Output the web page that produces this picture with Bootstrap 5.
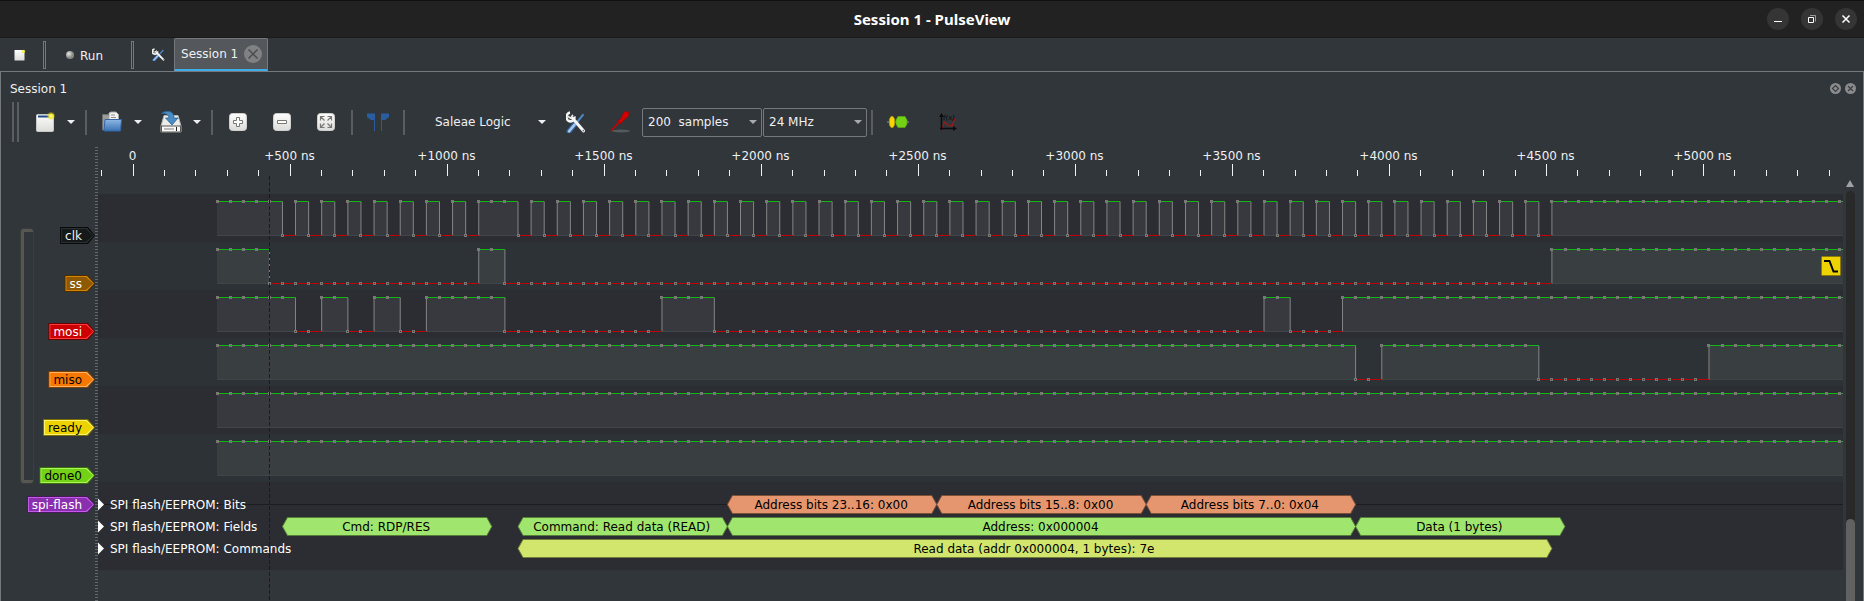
<!DOCTYPE html>
<html lang="en" data-bs-theme="dark">
<head>
<meta charset="utf-8">
<meta name="viewport" content="width=device-width, initial-scale=1">
<title>Session 1 - PulseView</title>
<link href="https://cdn.jsdelivr.net/npm/bootstrap@5.3.0/dist/css/bootstrap.min.css" rel="stylesheet">
<style>
body{background:#31363b;color:#eff0f1;font-family:"DejaVu Sans",sans-serif;font-size:12px;line-height:18px}
button,select{font:inherit;color:inherit}
svg{display:block;flex:none}
.titlebar{height:38px;background:#222;border-top:1px solid #111;border-bottom:1px solid #1a1a1a;font-family:"Noto Sans",sans-serif;font-weight:700;font-size:15px;color:#fff}
.side{flex:1 1 0;padding:0 7px}
.winbtns{gap:12px}
.winbtn{width:22px;height:22px;border:0;border-radius:50%;background:#353535;padding:0}
.plain{background:none;border:0;padding:0}
.mainbar{height:33px;padding-left:8px}
.mainbar .icon-cell{width:24px}
.dsep{width:3px;height:28px;border:1px solid #76797c}
.new-cell{margin-right:11px}
.run-cell{margin:0 28px 0 20px;gap:6px;height:20px;padding-top:2px}
.session-tab{width:94px;height:33px;border:1px solid #76797c;border-bottom:2px solid #3daee9;background:#54575b;border-radius:2px 2px 0 0;padding:0 5px 0 6px;margin-left:8px}
.pane{border:1px solid #76797c;border-bottom:0;min-height:0}
.dockhead{height:30px;padding:3px 7px 0 9px}
.tools{height:40px;padding-left:11px}
.grip{width:7px;height:40px;border:solid #5b5e60;border-width:0 2px;margin-right:4px}
.vsep{width:2px;height:25px;background:#5b5e60;margin:0 3px}
.tb{width:44px;height:30px}
.drop{width:15px;height:30px}
.combo{height:29px;border:1px solid #76797c;border-radius:2px;background:#31363b;padding:0 5px;appearance:none}
.combo.flat{border-color:transparent;padding-left:26px}
.combowrap{margin-right:1px}
.w-device{width:145px}
.w-samples{width:120px}
.w-rate{width:104px}
.combowrap svg{position:absolute;right:5px;top:12px;pointer-events:none}
.labels{width:94px}
.group{width:12px;height:254px;margin:87px 0 0 20px;border:solid #565751;border-width:3px 0 3px 3px;border-radius:2px;outline:1px solid #3a3d3d}
.tags{padding-top:85px;margin-left:-8px}
.sig{position:relative;height:17px;line-height:18px;white-space:nowrap;margin-bottom:31px;padding:0 13px 0 5px;isolation:isolate;background:var(--edge);color:var(--ink)}
.sig:nth-last-child(2){margin-bottom:12px}
.sig,.sig::before,.sig::after{clip-path:polygon(0 0,calc(100% - 7px) 0,100% 50%,calc(100% - 7px) 100%,0 100%)}
.sig::before{content:"";position:absolute;inset:1px;background:var(--rim);z-index:-2}
.sig::after{content:"";position:absolute;inset:2px;background:var(--face);z-index:-1}
.split{width:3px;margin-top:4px;background:repeating-linear-gradient(#31363b 0 1px,#65686b 1px 2px,#31363b 2px 3px)}
.wave{min-width:0}
.trig{position:absolute;right:2px;top:114px}
.vbar{width:20px;padding:38px 8px 0 3px}
.trough{background:#292929;border-radius:5px 5px 0 0;width:9px}
.thumb{height:82px;background:#616161;border-radius:5px 5px 0 0}
</style>
</head>
<body class="vh-100 d-flex flex-column overflow-hidden">
<svg width="0" height="0" class="position-absolute">
  <defs>
    <linearGradient id="paper" x2="0" y2="1"><stop stop-color="#fdfdfd"/><stop offset="1" stop-color="#dcdcda"/></linearGradient>
    <linearGradient id="blue" x2="0" y2="1"><stop stop-color="#8db8e4"/><stop offset="1" stop-color="#3b73b5"/></linearGradient>
    <radialGradient id="ball" cx=".35" cy=".35"><stop stop-color="#e8e8e2"/><stop offset="1" stop-color="#888a85"/></radialGradient>
    <radialGradient id="glow"><stop stop-color="#fffbd0"/><stop offset=".4" stop-color="#f6ee2c"/><stop offset="1" stop-color="#e8dc10" stop-opacity=".15"/></radialGradient>
    <g id="wrench">
      <path d="M17.500 3L9 12.500" stroke="#4f86c6" stroke-width="2"/>
      <path d="M8.500 12.500L3 18.500" stroke="#2f62a0" stroke-width="5" stroke-linecap="round"/>
      <path d="M8.500 12.500L3 18.500" stroke="#a9c6e8" stroke-width="2.500" stroke-linecap="round"/>
      <path d="M6.500 6.500L17.500 18" stroke="#f4f4f2" stroke-width="3" stroke-linecap="round"/>
      <path d="M4 1.500A4 4 0 1 0 8.500 5" stroke="#f4f4f2" stroke-width="2.500" fill="none"/>
      <path d="M1.500 4.500L4.500 6.500 7 3.500" stroke="#e6e6e4" stroke-width="1.500" fill="none"/>
      <circle cx="17.300" cy="17.800" r=".8" fill="#666"/>
    </g>
    <path id="caret" d="M0 0h8l-4 4z"/>
  </defs>
</svg>
<header class="titlebar d-flex align-items-center flex-shrink-0">
  <div class="side"></div>
  <div>Session 1 - PulseView</div>
  <div class="side winbtns d-flex justify-content-end">
    <button class="winbtn" aria-label="Minimize"><svg width="22" height="22"><path d="M7 13.500h8" stroke="#fff"/></svg></button>
    <button class="winbtn" aria-label="Restore"><svg width="22" height="22" fill="none"><path d="M9 7.500h5.500v6" stroke="#999"/><path d="M7.500 9.500h5v5h-5z" stroke="#fff"/></svg></button>
    <button class="winbtn" aria-label="Close"><svg width="22" height="22"><path d="M7.500 7.500l7 7m0-7l-7 7" stroke="#fff" stroke-width="1.500"/></svg></button>
  </div>
</header>

<nav class="mainbar d-flex align-items-center flex-shrink-0">
  <button class="plain icon-cell new-cell d-flex justify-content-center" aria-label="New session"><svg width="12" height="12"><rect x=".5" y="1" width="10" height="10.500" rx=".5" fill="url(#paper)"/><circle cx="9.500" cy="2.500" r="2" fill="url(#glow)"/></svg></button>
  <span class="dsep"></span>
  <button class="plain run-cell d-flex align-items-center"><svg width="8" height="10"><circle cx="4" cy="4" r="4" fill="url(#ball)"/></svg>Run</button>
  <span class="dsep"></span>
  <button class="plain icon-cell d-flex justify-content-center ms-2 ps-2" aria-label="Settings"><svg width="13" height="13" viewBox="0 0 20 20"><use href="#wrench"/></svg></button>
  <div class="session-tab d-flex align-items-center justify-content-between">
    <span>Session 1</span>
    <button class="plain" aria-label="Close tab"><svg width="18" height="18"><circle cx="9" cy="9" r="9" fill="#7f8182"/><path d="M4.500 4.500l9 9m0-9l-9 9" stroke="#4a4d50" stroke-width="1.500"/></svg></button>
  </div>
</nav>

<main class="pane flex-grow-1 d-flex flex-column">
  <div class="dockhead d-flex align-items-center justify-content-between flex-shrink-0">
    <span>Session 1</span>
    <span class="d-flex gap-1">
      <button class="plain" aria-label="Float"><svg width="11" height="11" fill="none"><circle cx="5.500" cy="5.500" r="5.500" fill="#8a8c8e"/><path d="M5.500 2.500l3 3-3 3-3-3z" stroke="#3a3d40" stroke-width="1.200"/></svg></button>
      <button class="plain" aria-label="Close"><svg width="11" height="11"><circle cx="5.500" cy="5.500" r="5.500" fill="#8a8c8e"/><path d="M3 3l5 5m0-5l-5 5" stroke="#3a3d40" stroke-width="1.200"/></svg></button>
    </span>
  </div>

  <div class="tools d-flex align-items-center flex-shrink-0">
    <span class="grip"></span>
    <button class="plain tb d-flex align-items-center justify-content-center" aria-label="New view"><svg width="20" height="22"><rect x="1.500" y="3.500" width="17" height="17" rx="1" fill="url(#paper)" stroke="#c9c9c5"/><rect x="3" y="4.500" width="12" height="2" fill="#204a87"/><circle cx="16" cy="5" r="4" fill="url(#glow)"/></svg></button>
    <button class="plain drop" aria-label="New view menu"><svg width="8" height="4" fill="#eff0f1"><use href="#caret"/></svg></button>
    <span class="vsep"></span>
    <button class="plain tb d-flex align-items-center justify-content-center" aria-label="Open"><svg width="20" height="22"><path d="M.5 19V3.500H6L8 6v13z" fill="#9b9d9a" stroke="#6d6f6c"/><path d="M7 11V2l2-1h5l2.500 2.500V11z" fill="#f2f2f0" stroke="#a5a5a1"/><path d="M9 4h4m-4 2.500h5" stroke="#8b8d8a"/><path d="M3 8.500h16.500l-1 11.500H2z" fill="url(#blue)" stroke="#3465a4"/></svg></button>
    <button class="plain drop" aria-label="Open menu"><svg width="8" height="4" fill="#eff0f1"><use href="#caret"/></svg></button>
    <button class="plain tb d-flex align-items-center justify-content-center" aria-label="Save"><svg width="22" height="22"><path d="M4 4.500h14l3 10.500v6H1v-6z" fill="#ecece9" stroke="#b5b5b0"/><rect x="1.500" y="15" width="19" height="6" fill="#f8f8f6" stroke="#555753"/><path d="M4 18h10" stroke="#bbb" stroke-width="2"/><path d="M16.500 16v4" stroke="#222"/><path d="M1.500 2.500C5-.5 14-1.500 14 7h4l-6 7-6.500-7H9C9 4 6 2 1.500 2.500z" fill="#4b8cc4" stroke="#2a6496" stroke-width=".8"/></svg></button>
    <button class="plain drop" aria-label="Save menu"><svg width="8" height="4" fill="#eff0f1"><use href="#caret"/></svg></button>
    <span class="vsep"></span>
    <button class="plain tb d-flex align-items-center justify-content-center" aria-label="Zoom in"><svg width="18" height="18"><rect x=".5" y=".5" width="17" height="17" rx="3" fill="url(#paper)" stroke="#d0d0cc"/><path d="M7.500 4.500h3v3h3v3h-3v3h-3v-3h-3v-3h3z" fill="#fff" stroke="#777975"/></svg></button>
    <button class="plain tb d-flex align-items-center justify-content-center" aria-label="Zoom out"><svg width="18" height="18"><rect x=".5" y=".5" width="17" height="17" rx="3" fill="url(#paper)" stroke="#d0d0cc"/><path d="M4.500 7.500h9v3h-9z" fill="#fff" stroke="#777975"/></svg></button>
    <button class="plain tb d-flex align-items-center justify-content-center" aria-label="Zoom to fit"><svg width="18" height="18"><rect x=".5" y=".5" width="17" height="17" rx="3" fill="url(#paper)" stroke="#d0d0cc"/><path d="M3.500 7.500v-4h4M10.500 3.500h4v4M14.500 10.500v4h-4M7.500 14.500h-4v-4M4 4l3.500 3.500M14 4l-3.500 3.500M14 14l-3.500-3.500M4 14l3.500-3.500" fill="none" stroke="#777975" stroke-width="1.200"/></svg></button>
    <span class="vsep"></span>
    <button class="plain tb d-flex align-items-center justify-content-center" aria-label="Show cursors"><svg width="22" height="20"><path d="M0 1.500h8V19H7V8H4L0 5zM22 1.500h-8V19h1V8h3l4-3z" fill="#2a5ca0"/></svg></button>
    <span class="vsep"></span>
    <div class="combowrap position-relative">
      <select class="combo flat w-device" aria-label="Device"><option>Saleae Logic</option></select>
      <svg width="10" height="5" fill="#eff0f1"><use href="#caret"/></svg>
    </div>
    <button class="plain tb d-flex align-items-center justify-content-center" aria-label="Configure device"><svg width="20" height="22" viewBox="0 0 20 20" preserveAspectRatio="none"><use href="#wrench"/></svg></button>
    <button class="plain tb d-flex align-items-center justify-content-center" aria-label="Configure channels"><svg width="20" height="22"><ellipse cx="11" cy="20" rx="9" ry="1.500" fill="#555a5d"/><path d="M1 20L9 11" stroke="#c00" stroke-width="1.500"/><path d="M8 9.500L10.500 8 14 1l4.500-.5V5L12 11l-1.500 2z" fill="#d40000" stroke="#a40000" stroke-width=".6"/></svg></button>
    <div class="combowrap position-relative">
      <select class="combo w-samples" aria-label="Sample count"><option>200&nbsp; samples</option></select>
      <svg width="8" height="4" fill="#a8aaab"><use href="#caret"/></svg>
    </div>
    <div class="combowrap position-relative">
      <select class="combo w-rate" aria-label="Sample rate"><option>24 MHz</option></select>
      <svg width="8" height="4" fill="#a8aaab"><use href="#caret"/></svg>
    </div>
    <span class="vsep"></span>
    <button class="plain tb d-flex align-items-center justify-content-center me-1" aria-label="Add protocol decoder"><svg width="22" height="14"><path d="M0 7h22" stroke="#8f9294"/><path d="M4 1.500h2L7.500 4v6L6 12.500H4L2.500 10V4z" fill="#f5d400" stroke="#c4a000" stroke-width=".6"/><path d="M11 1.500h7L20 5v4l-2 3.500h-7L9 9V5z" fill="#73d216" stroke="#5fae12" stroke-width=".6"/></svg></button>
    <button class="plain tb d-flex align-items-center justify-content-center ps-1" aria-label="Add math signal"><svg width="18" height="18"><path d="M3 17L5 9l4 3 4 1 3-8" stroke="#a3151a" stroke-width="1.200" fill="none"/><path d="M2.500 17V3M1 15.500h15" stroke="#0c0d0e" stroke-width="1.500"/><path d="M2.500 0l2.500 4H0zM18 15.500L14 13v5z" fill="#0c0d0e"/><text x="4" y="7" font-size="7" font-style="italic" fill="#0c0d0e">f(x)</text></svg></button>
  </div>

  <div class="flex-grow-1 d-flex overflow-hidden">
    <div class="labels d-flex justify-content-between align-items-start flex-shrink-0">
      <div class="group"></div>
      <div class="tags d-flex flex-column align-items-end" id="tags"></div>
    </div>
    <div class="split flex-shrink-0"></div>
    <div class="wave flex-grow-1 position-relative overflow-hidden">
      <svg id="view" width="100%" height="100%" font-size="12" class="position-absolute"></svg>
      <svg class="trig" width="20" height="20"><rect x=".5" y=".5" width="19" height="19" rx="1" fill="#edd400" stroke="#8a7b00"/><path d="M3 5h5.500l4 10.500H17" stroke="#000" stroke-width="2" fill="none"/></svg>
    </div>
    <div class="vbar flex-shrink-0 d-flex flex-column">
      <svg width="8" height="7" class="mb-1"><path d="M0 7h8L4 0z" fill="#a0a2a3"/></svg>
      <div class="trough flex-grow-1 d-flex flex-column justify-content-end"><div class="thumb"></div></div>
    </div>
  </div>
</main>

<script>
// Horizontal scale: 500 ns spans about 157 px, sampled at 24 MHz.
const PX_NS = 0.3141, ZERO = 35, FIRST = 119, PITCH = PX_NS * 1e3 / 24, LAST = 400;
const X = k => +(FIRST + k * PITCH).toFixed(2);
const clk = [[0, 5]];
for (let k = 6; k < 20; k += 2) clk.push([k, k + 1]);
clk.push([20, 23]);
for (let k = 24; k < 102; k += 2) clk.push([k, k + 1]);
clk.push([102, LAST]);
// name, high intervals, face, rim, edge, ink
const signals = [
  ['clk', clk, '#16191a', '#2c3032', '#08090a', '#eff0f1'],
  ['ss', [[0, 4], [20, 22], [102, LAST]], '#8f5902', '#d68403', '#4a2e01', '#fff'],
  ['mosi', [[0, 6], [8, 10], [12, 14], [16, 22], [34, 38], [80, 82], [86, LAST]], '#cc0000', '#ff3a3a', '#6a0000', '#fff'],
  ['miso', [[0, 87], [89, 101], [114, LAST]], '#f57900', '#ffb265', '#804000', '#000'],
  ['ready', [[0, LAST]], '#edd400', '#fff36e', '#7b6e00', '#000'],
  ['done0', [[0, LAST]], '#73d216', '#a7f75c', '#3c6e0b', '#000'],
];
const decoder = ['spi-flash', null, '#8a2fae', '#c15be8', '#481a5b', '#fff'];
document.getElementById('tags').innerHTML = [...signals, decoder].map(([n, , f, r, e, i]) =>
  `<span class="sig" style="--face:${f};--rim:${r};--edge:${e};--ink:${i}">${n}</span>`).join('');

const view = document.getElementById('view');
function draw() {
  const width = view.clientWidth;
  let s = '';
  // ruler
  for (let i = -1; ZERO + i * 100 * PX_NS < width; i++) {
    const at = ZERO + i * 100 * PX_NS, x = Math.floor(at) + .5, major = i % 5 === 0;
    s += `<path d="M${x} ${major ? 22 : 28}V34" stroke="#eff0f1"/>`;
    if (major && at + 32 < width) s += `<text x="${x - 1}" y="18" text-anchor="middle" fill="#eff0f1">${i ? '+' + i * 100 + ' ns' : '0'}</text>`;
  }
  // logic traces
  signals.forEach(([, highs], r) => {
    const top = 52 + r * 48, hi = top + 7.5, lo = top + 41.5;
    s += `<rect y="${top}" width="100%" height="48" fill="${r % 2 ? '#2d3236' : '#2b2d32'}"/>`;
    s += `<path d="M${X(0)} ${lo}H${width}" stroke="#3c4042"/>`;
    let reds = '', greens = '', edges = '', fills = '', dots = '', cores = '';
    highs.forEach(([a, b], n) => {
      fills += `M${X(a)} ${hi}H${X(b)}V${lo}H${X(a)}z`;
      greens += `M${X(a)} ${hi}H${X(b)}`;
      if (a) edges += `M${X(a)} ${hi}V${lo}`;
      if (b < LAST) edges += `M${X(b)} ${hi}V${lo}`;
      if (highs[n + 1]) reds += `M${X(b)} ${lo}H${X(highs[n + 1][0])}`;
    });
    for (let k = 0; k < LAST; k++) {
      const up = highs.some(([a, b]) => k >= a && k < b), y = up ? hi : lo;
      const x = Math.round(X(k) - 1.5);
      dots += `M${x} ${y}h3`;
      if (!up) cores += `M${x + 1} ${y}h1`;
    }
    s += `<path d="${fills}" fill="#fff" fill-opacity=".06"/><path d="${edges}" stroke="#858585"/><path d="${reds}" stroke="#c00000"/><path d="${greens}" stroke="#11b811"/><path d="${dots}" stroke="#787878" stroke-width="3"/><path d="${cores}" stroke="#503838"/>`;
  });
  // decoder rows
  s += `<rect y="340" width="100%" height="88" fill="#2b2d32"/><path d="M0 362.5H${width}" stroke="#1c1d20"/>`;
  const rows = [
    ['Bits', '#e6966e', '#7d4f38', [[39, 55, 'Address bits 23..16: 0x00'], [55, 71, 'Address bits 15..8: 0x00'], [71, 87, 'Address bits 7..0: 0x04']]],
    ['Fields', '#a0e66e', '#557d38', [[5, 21, 'Cmd: RDP/RES'], [23, 39, 'Command: Read data (READ)'], [39, 87, 'Address: 0x000004'], [87, 103, 'Data (1 bytes)']]],
    ['Commands', '#d2e66e', '#717d38', [[23, 102, 'Read data (addr 0x000004, 1 bytes): 7e']]],
  ];
  rows.forEach(([name, fill, line, items], r) => {
    const y = 362.5 + r * 22;
    s += `<path d="M0 ${y - 6}l6 6l-6 6z" fill="#fff"/><text x="12" y="${y + 4.5}" fill="#fff">SPI flash/EEPROM: ${name}</text>`;
    items.forEach(([a, b, t]) => {
      const p = X(a), q = X(b);
      s += `<path d="M${p} ${y}l5 -9H${q - 5}l5 9l-5 9H${p + 5}z" fill="${fill}" stroke="${line}"/><text x="${(p + q) / 2 - 1}" y="${y + 4.5}" text-anchor="middle" fill="#000">${t}</text>`;
    });
  });
  s += `<path d="M${Math.round(X(4)) + .5} 34V2000" stroke="#0a0aa0" stroke-dasharray="4 2"/>`;
  view.innerHTML = s;
}
draw();
addEventListener('resize', draw);
</script>
<script src="https://cdn.jsdelivr.net/npm/bootstrap@5.3.0/dist/js/bootstrap.bundle.min.js"></script>
</body>
</html>
